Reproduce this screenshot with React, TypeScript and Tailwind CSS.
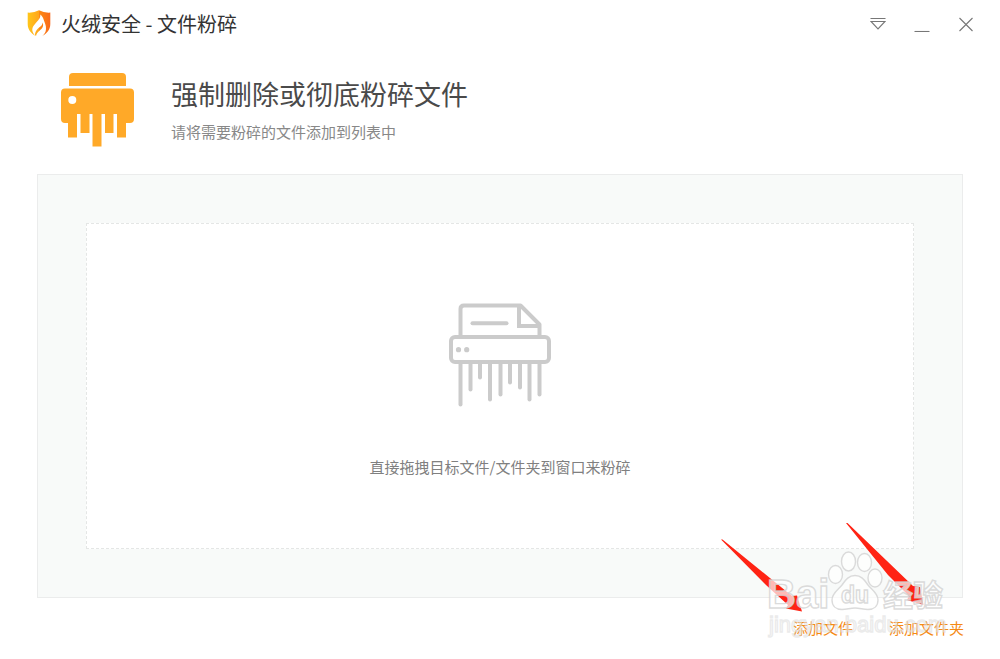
import type { ReactNode } from "react";

interface TitleButtonProps {
    label: string;
    children: ReactNode;
}

interface StripProps {
    x: number;
    end: number;
}

const SANS = "font-['Noto_Sans_CJK_SC',sans-serif]";

const STRIPS: StripProps[] = [
    { x: 30.5, end: 115 },
    { x: 40.5, end: 100 },
    { x: 50, end: 88 },
    { x: 60, end: 110 },
    { x: 70.5, end: 105 },
    { x: 80, end: 93 },
    { x: 90, end: 98 },
    { x: 99.5, end: 110 },
    { x: 109.5, end: 105 },
];

function Logo() {
    return (
        <svg className="shrink-0" width={24} height={28} viewBox="0 0 24 28" aria-hidden="true">
            <defs>
                <linearGradient id="shield" x1="0" y1="0" x2="1" y2="0">
                    <stop offset="0" stopColor="#ffc61a" />
                    <stop offset="0.5" stopColor="#ffa51c" />
                    <stop offset="0.51" stopColor="#fd8a12" />
                    <stop offset="1" stopColor="#f9691a" />
                </linearGradient>
            </defs>
            <path
                d="M12 0.3 Q17 3 23.3 2.6 V14 C23.3 20 19.5 23.5 16 25.5 L8 25.5 C4.5 23.5 0.7 20 0.7 14 V2.6 Q7 3 12 0.3Z"
                fill="url(#shield)"
            />
            <path
                d="M13.2 4.6 C14 8.3 10.8 10.7 8 14 C4.4 17.8 4.4 21.4 8 25.6 C7.8 21 11 18.6 13.4 16.6 C14.8 15.4 15.6 14 15.4 12.4 C17 15.3 15.8 17.8 13.2 20 C11 22 9 23.6 9.2 26.4 L12 27.6 L15 26.4 C17.4 24.4 18.9 22 19 19 C19.3 15.6 17.7 12.5 16.7 9.7 C15.9 7.5 15 5.8 13.2 4.6Z"
                fill="#fff"
            />
        </svg>
    );
}

function ShredderBadge() {
    return (
        <svg className="shrink-0" width={74} height={74} viewBox="0 0 74 74" fill="#ffa928" aria-hidden="true">
            <path d="M12 0H61Q65 0 65 4V13H8V4Q8 0 12 0Z" />
            <path
                fillRule="evenodd"
                d="M4 15.5H69Q73 15.5 73 19.5V46Q73 50 69 50H65V64.5H56V41H52.5V60H44V41H40.5V73.5H31.5V41H28.5V60H19.5V41H16V64.5H7V50H4Q0 50 0 46V19.5Q0 15.5 4 15.5ZM11.3 23A4 4 0 1 0 11.3 31A4 4 0 1 0 11.3 23Z"
            />
        </svg>
    );
}

function ShredderOutline() {
    return (
        <svg
            width={104}
            height={104}
            viewBox="18 13 104 104"
            fill="none"
            stroke="#cbcbcb"
            strokeWidth={4}
            aria-hidden="true"
        >
            <rect x={21} y={47} width={98} height={25} rx={4} />
            <path d="M30.5 46V19Q30.5 15.5 34 15.5H90.5L109.5 34.5V46" strokeLinejoin="round" />
            <path d="M89 16V36H109" />
            <path d="M42.5 33.2H76.5" strokeLinecap="round" />
            <circle cx={28.5} cy={59.7} r={2.6} fill="#cbcbcb" stroke="none" />
            <circle cx={36.7} cy={59.7} r={2.6} fill="#cbcbcb" stroke="none" />
            {STRIPS.map(({ x, end }) => (
                <path key={x} d={`M${x} 73V${end - 0.5}`} strokeLinecap="round" />
            ))}
        </svg>
    );
}

function TitleButton({ label, children }: TitleButtonProps) {
    return (
        <button type="button" aria-label={label} className="cursor-pointer hover:bg-gray-100">
            <svg
                width={16}
                height={16}
                viewBox="0 0 16 16"
                fill="none"
                stroke="#777"
                strokeWidth={1.1}
                aria-hidden="true"
            >
                {children}
            </svg>
        </button>
    );
}

function Annotations() {
    return (
        <svg
            className="absolute right-0 bottom-0 pointer-events-none"
            width={300}
            height={149}
            viewBox="0 0 300 149"
            aria-hidden="true"
        >
            <g fill="#ff2314">
                <path d="M21 29.5L22.5 29.5L92 86L97 85.5L102 101.5L86 98.5L88 95L66 75Z" />
                <path d="M146 13L147.5 13L213 76L220 77L223.5 95L207 90L209 86L188 65Z" />
            </g>
            <g
                fill="#fff"
                fillOpacity={0.7}
                stroke="#d2d2d2"
                strokeOpacity={0.8}
                strokeWidth={1.4}
                className="font-['Liberation_Sans','Noto_Sans_CJK_SC',sans-serif] font-bold"
            >
                <text x={67} y={98} fontSize={40}>
                    Bai
                </text>
                <ellipse cx={135.5} cy={64.5} rx={7} ry={9} />
                <ellipse cx={148.5} cy={51.5} rx={7} ry={9.5} />
                <ellipse cx={164.5} cy={52.5} rx={7} ry={9} />
                <ellipse cx={175} cy={68} rx={7} ry={9} />
                <path d="M155 65.5C162 65.5 165 71 168 75C172 80 178 83 178 90C178 96 174 99.5 168 99.5C163 99.5 160 98 155 98C150 98 147 99.5 142 99.5C136 99.5 132 96 132 90C132 83 138 80 142 75C145 71 148 65.5 155 65.5Z" />
                <text x={141} y={93} fontSize={23}>
                    du
                </text>
                <text x={183} y={96} fontSize={30}>
                    经验
                </text>
                <text
                    x={69}
                    y={122}
                    fontSize={22}
                    fillOpacity={0.4}
                    strokeOpacity={0.45}
                    className="font-normal"
                >
                    jingyan.baidu.com
                </text>
            </g>
        </svg>
    );
}

function App() {
    return (
        <div className={`relative flex flex-col min-h-screen bg-white ${SANS}`}>
            <header className="flex flex-row items-center justify-between h-12 pl-[27px] pr-[26px]">
                <div className="flex flex-row items-center gap-[10px]">
                    <Logo />
                    <span className="text-[20px] leading-7 text-[#333]">火绒安全 - 文件粉碎</span>
                </div>
                <div className="flex flex-row items-center gap-7">
                    <TitleButton label="菜单">
                        <path d="M0.5 2.5H15.5M1 5.5H15L8 13Z" />
                    </TitleButton>
                    <TitleButton label="最小化">
                        <path d="M0.5 15.5H15.5" />
                    </TitleButton>
                    <TitleButton label="关闭">
                        <path d="M1.5 2L14.5 15M14.5 2L1.5 15" />
                    </TitleButton>
                </div>
            </header>
            <section className="flex flex-row items-center gap-9 pl-[61px] pt-[25px]">
                <ShredderBadge />
                <div className="flex flex-col gap-2">
                    <h1 className="text-[27px] leading-9 text-[#4a4a4a]">强制删除或彻底粉碎文件</h1>
                    <p className="text-[15px] leading-6 text-[#888]">请将需要粉碎的文件添加到列表中</p>
                </div>
            </section>
            <main className="flex flex-col flex-1 mx-[37px] mt-[27px] p-12 border border-[#ebecec] bg-[#f8faf9]">
                <div className="flex flex-col flex-1 items-center justify-center gap-12 pt-[10px] border border-dashed border-[#e4e6e5] bg-white">
                    <ShredderOutline />
                    <p className="text-[15px] leading-6 text-[#808080]">
                        直接拖拽目标文件/文件夹到窗口来粉碎
                    </p>
                </div>
            </main>
            <footer className="flex flex-row justify-end gap-9 h-[61px] pt-[18px] pr-9 text-[15px] leading-6 text-[#f58a14]">
                <button type="button" className="h-6 cursor-pointer">
                    添加文件
                </button>
                <button type="button" className="h-6 cursor-pointer">
                    添加文件夹
                </button>
            </footer>
            <Annotations />
        </div>
    );
}

export default App;
